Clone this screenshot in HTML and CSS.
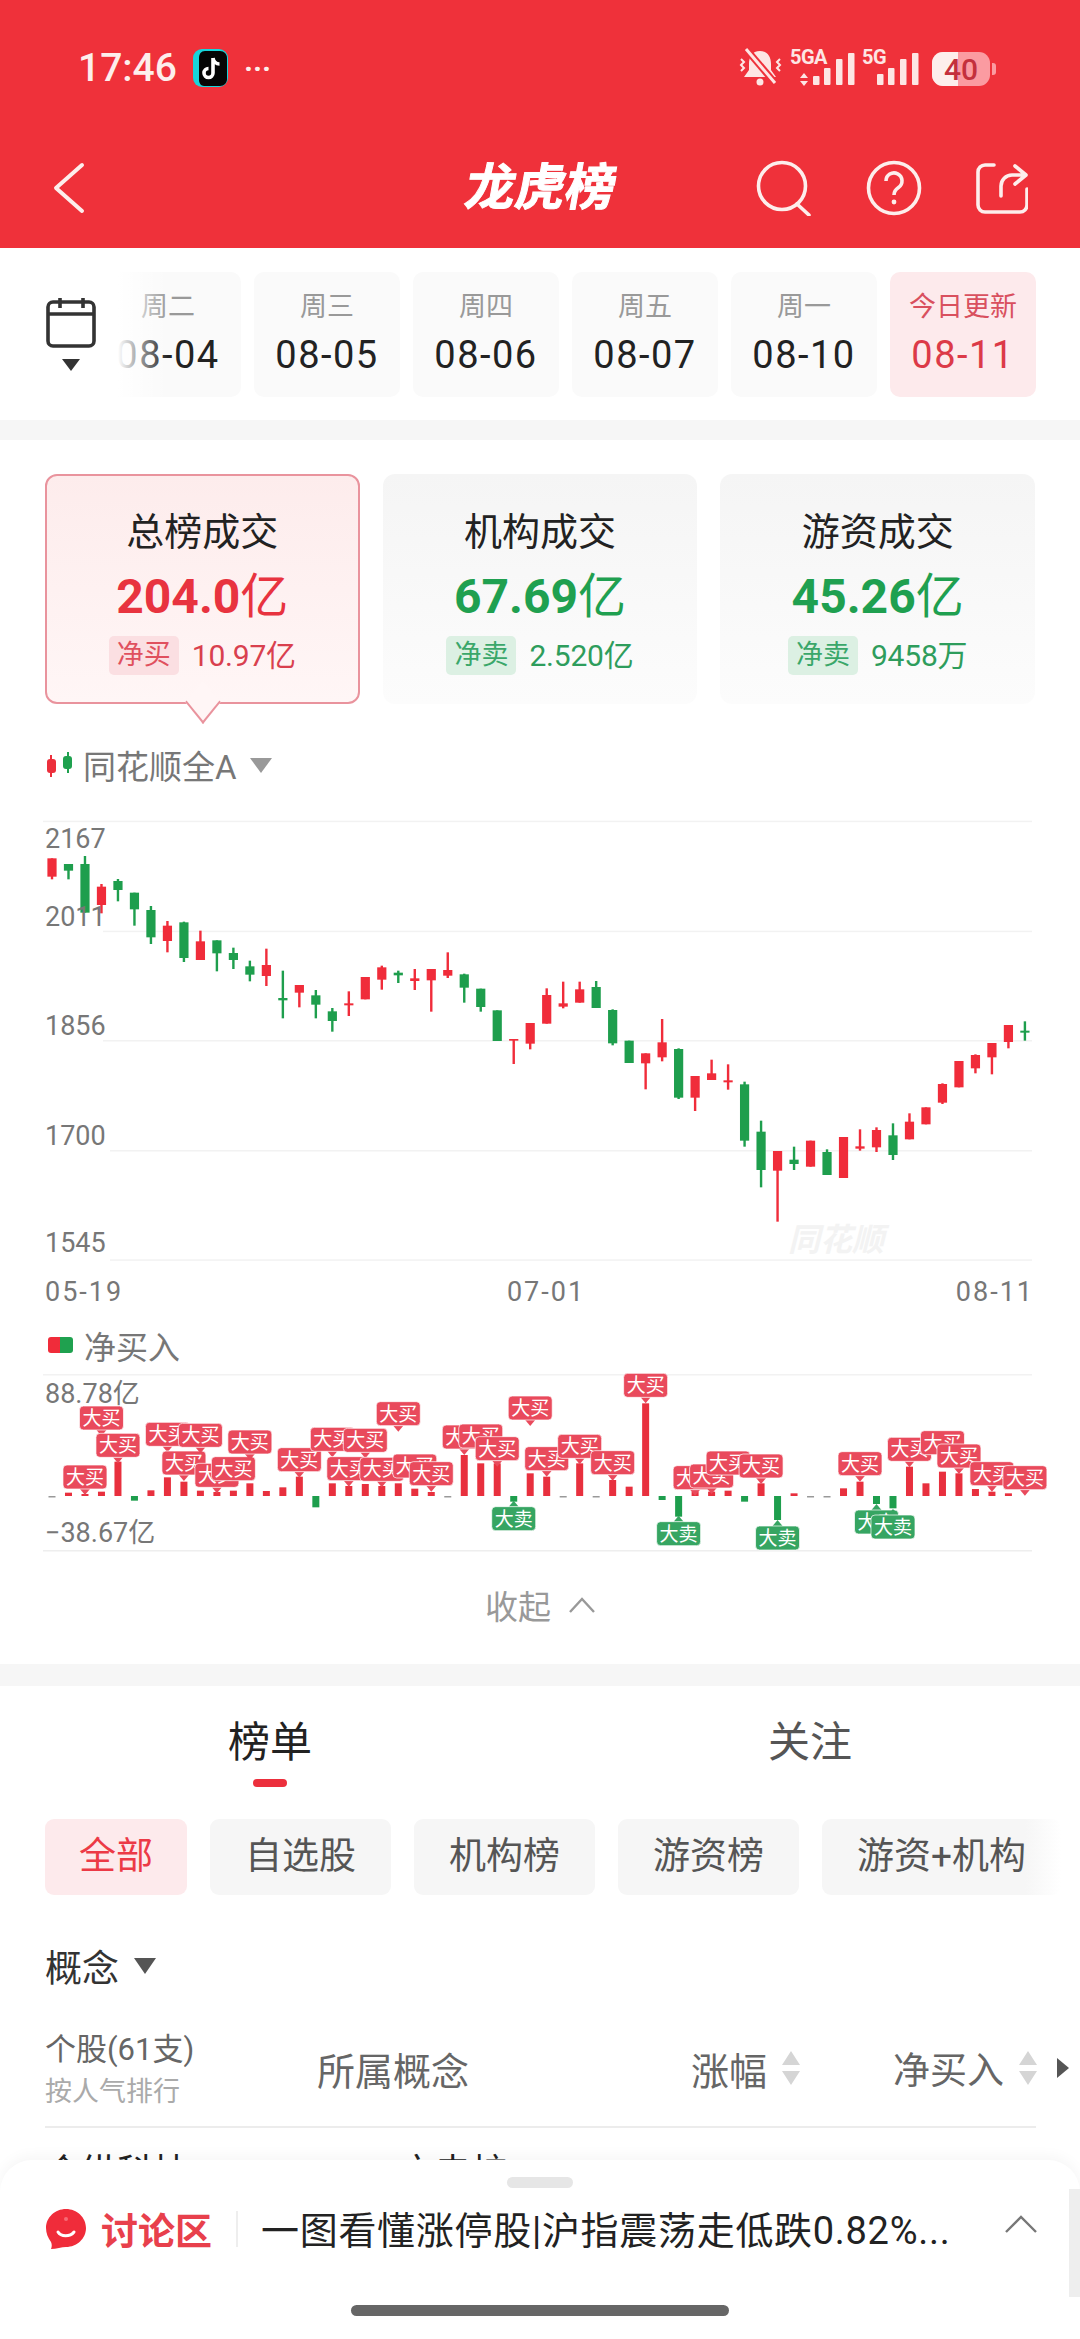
FILE: index.html
```html
<!DOCTYPE html>
<html lang="zh-CN">
<head>
    <meta charset="UTF-8">
    <meta name="viewport" content="width=device-width, initial-scale=1.0">
    <title>龙虎榜</title>
    <link rel="stylesheet" href="styles.css">
</head>
<body>
    <header class="top">
        <div class="status">
            <div class="status-left">
                <span class="clock">17:46</span>
                <svg class="tiktok" width="35" height="38" viewBox="0 0 35 38">
                    <rect width="35" height="38" rx="9" fill="#17d4da"/>
                    <path d="M6 9c0-4 2-7 6-7h15c4 0 7 3 7 7v21c0 4-3 7-7 7H11c-3 0-5-3-5-6z" fill="#050505"/>
                    <path d="M20 9v15a4.500 4.500 0 1 1-4.500-4.500M20 9c.5 3.500 3 6 6.500 6" fill="none" stroke="#fff" stroke-width="3.600"/>
                </svg>
                <span class="dots">···</span>
            </div>
            <svg class="status-right" width="258" height="40" viewBox="0 0 258 40">
                <path d="M22 3c-8 0-11 6-11 13v6l-5 7h32l-5-7v-6c0-7-3-13-11-13z" fill="#fde6e4"/>
                <circle cx="22" cy="34" r="3.500" fill="#fde6e4"/>
                <line x1="8" y1="1" x2="37" y2="35" stroke="#ef313a" stroke-width="7"/>
                <line x1="8" y1="1" x2="37" y2="35" stroke="#fde6e4" stroke-width="3"/>
                <path d="M3 11l3 3-3 3 3 3-3 3M42 11l-3 3 3 3-3 3 3 3" fill="none" stroke="#fde6e4" stroke-width="2"/>
                <text class="net-type" x="52" y="16">5GA</text>
                <path d="M66 25l4 5h-8zM66 38l4-5h-8z" fill="#fde6e4"/>
                <g fill="#fde6e4">
                    <rect x="75" y="28" width="6.500" height="9" rx="1"/>
                    <rect x="86" y="20" width="6.500" height="17" rx="1"/>
                    <rect x="98" y="11" width="6.500" height="26" rx="1"/>
                    <rect x="110" y="5" width="6.500" height="32" rx="1"/>
                    <rect x="139" y="26" width="6.500" height="11" rx="1"/>
                    <rect x="150" y="20" width="6.500" height="17" rx="1"/>
                    <rect x="162" y="11" width="6.500" height="26" rx="1"/>
                    <rect x="174" y="5" width="6.500" height="32" rx="1"/>
                </g>
                <text class="net-type" x="124" y="16">5G</text>
                <rect x="194" y="4" width="58" height="34" rx="11" fill="#fb9ba1"/>
                <path d="M205 4h15v34h-15a11 11 0 0 1-11-11V15a11 11 0 0 1 11-11z" fill="#fdeeec"/>
                <path d="M254 15h1a3 3 0 0 1 3 3v6a3 3 0 0 1-3 3h-1z" fill="#fb9ba1"/>
                <text class="battery-num" x="223" y="32">40</text>
            </svg>
        </div>
        <nav class="nav">
            <svg class="nav-back" width="32" height="52" viewBox="0 0 32 52">
                <polyline points="29,3 3,26 29,49" fill="none" stroke="#fdeeec" stroke-width="4" stroke-linecap="round" stroke-linejoin="round"/>
            </svg>
            <h1 class="nav-title">龙虎榜</h1>
            <div class="nav-icons">
                <svg width="56" height="56" viewBox="0 0 56 56">
                    <circle cx="26" cy="26" r="23.500" fill="none" stroke="#fdeeec" stroke-width="3.600"/>
                    <line x1="41" y1="44" x2="53" y2="55" stroke="#fdeeec" stroke-width="3.600" stroke-linecap="round"/>
                </svg>
                <svg width="56" height="56" viewBox="0 0 56 56">
                    <circle cx="28" cy="28" r="25.500" fill="none" stroke="#fdeeec" stroke-width="3.600"/>
                    <path d="M20 21a8 8 0 1 1 12.500 6.500c-3 2-4.500 3.500-4.500 7.500" fill="none" stroke="#fdeeec" stroke-width="3.600"/>
                    <circle cx="28" cy="42" r="2.400" fill="#fdeeec"/>
                </svg>
                <svg width="52" height="52" viewBox="0 0 52 52">
                    <path d="M18 3H9a7 7 0 0 0-7 7v33a7 7 0 0 0 7 7h35a7 7 0 0 0 7-7V27" fill="none" stroke="#fdeeec" stroke-width="3.600" stroke-linecap="round"/>
                    <path d="M25 34v-10a11 11 0 0 1 11-11h14M39 4l11 9-11 9" fill="none" stroke="#fdeeec" stroke-width="3.600" stroke-linecap="round" stroke-linejoin="round"/>
                </svg>
            </div>
        </nav>
    </header>

    <section class="date-bar">
        <div class="cal-btn">
            <svg width="52" height="76" viewBox="0 0 52 76">
                <rect x="3" y="5" width="46" height="44" rx="5" fill="none" stroke="#333" stroke-width="3.600"/>
                <line x1="3" y1="17" x2="49" y2="17" stroke="#333" stroke-width="3.600"/>
                <path d="M15 1v10M38 1v10" stroke="#333" stroke-width="3.600"/>
                <path d="M17 62h18l-9 12z" fill="#333"/>
            </svg>
        </div>
        <div class="date-scroll">
            <div class="date-tab"><span class="week">周二</span><span class="day">08-04</span></div>
            <div class="date-tab"><span class="week">周三</span><span class="day">08-05</span></div>
            <div class="date-tab"><span class="week">周四</span><span class="day">08-06</span></div>
            <div class="date-tab"><span class="week">周五</span><span class="day">08-07</span></div>
            <div class="date-tab"><span class="week">周一</span><span class="day">08-10</span></div>
            <div class="date-tab active"><span class="week">今日更新</span><span class="day">08-11</span></div>
        </div>
    </section>

    <div class="band"></div>

    <section class="cards">
        <div class="card active">
            <div class="card-title">总榜成交</div>
            <div class="card-value red">204.0<em>亿</em></div>
            <div class="card-sub"><span class="tag tag-red">净买</span><span class="sub-num red-soft">10.97亿</span></div>
        </div>
        <div class="card">
            <div class="card-title">机构成交</div>
            <div class="card-value green">67.69<em>亿</em></div>
            <div class="card-sub"><span class="tag tag-green">净卖</span><span class="sub-num green-soft">2.520亿</span></div>
        </div>
        <div class="card">
            <div class="card-title">游资成交</div>
            <div class="card-value green">45.26<em>亿</em></div>
            <div class="card-sub"><span class="tag tag-green">净卖</span><span class="sub-num green-soft">9458万</span></div>
        </div>
    </section>

    <div class="index-row">
        <svg width="26" height="26" viewBox="0 0 26 26">
            <rect x="3" y="3" width="2" height="22" fill="#ec2f3c"/>
            <rect x="0" y="7" width="9" height="14" rx="3" fill="#ec2f3c"/>
            <rect x="20" y="0" width="2" height="21" fill="#1fa14f"/>
            <rect x="16" y="4" width="9" height="13" rx="3" fill="#1fa14f"/>
        </svg>
        <span>同花顺全A</span>
        <i class="tri tri-grey"></i>
    </div>

    <svg id="klineChart" class="chart" width="1080" height="510" viewBox="0 0 1080 510"></svg>

    <div class="net-row">
        <span class="net-icon"></span>
        <span>净买入</span>
    </div>

    <svg id="netChart" class="chart net-chart" width="1080" height="195" viewBox="0 0 1080 195"></svg>

    <div class="collapse">
        <span>收起</span>
        <svg width="26" height="16" viewBox="0 0 26 16">
            <polyline points="1,15 13,2 25,15" fill="none" stroke="#999" stroke-width="2.400"/>
        </svg>
    </div>

    <div class="band band-low"></div>

    <section class="tabs">
        <div class="tab active">榜单</div>
        <div class="tab">关注</div>
    </section>

    <section class="filters">
        <span class="chip active">全部</span>
        <span class="chip">自选股</span>
        <span class="chip">机构榜</span>
        <span class="chip">游资榜</span>
        <span class="chip">游资+机构</span>
    </section>

    <div class="concept"><span>概念</span><i class="tri tri-dark"></i></div>

    <section class="table-head">
        <div class="col-stock">
            <div class="stock-count">个股(61支)</div>
            <div class="stock-sort">按人气排行</div>
        </div>
        <div class="col-concept">所属概念</div>
        <div class="col-rise">涨幅
            <svg class="sort" width="20" height="34" viewBox="0 0 20 34"><path d="M10 0l9 14H1zM10 34L1 20h18z" fill="#d5d5d5"/></svg>
        </div>
        <div class="col-net">净买入
            <svg class="sort" width="20" height="34" viewBox="0 0 20 34"><path d="M10 0l9 14H1zM10 34L1 20h18z" fill="#d5d5d5"/></svg>
            <svg class="more" width="12" height="20" viewBox="0 0 12 20"><path d="M0 0l12 10L0 20z" fill="#555"/></svg>
        </div>
    </section>
    <div class="table-line"></div>
    <div class="peek-row"><span>合纵科技</span><span>充电桩</span></div>

    <aside class="sheet">
        <div class="sheet-handle"></div>
        <div class="sheet-row">
            <svg class="sheet-logo" width="40" height="40" viewBox="0 0 40 40">
                <path d="M20 0c11 0 20 8.500 20 19s-9 19-20 19c-4 0-10 2-15 2 1-2 1-5 0-7C2 29 0 24 0 19 0 8.500 9 0 20 0z" fill="#f02c3a"/>
                <path d="M12 23c3 5 12 5 16 0" fill="none" stroke="#fff" stroke-width="3" stroke-linecap="round"/>
                <circle cx="20" cy="10" r="2" fill="#f76a74"/>
            </svg>
            <span class="sheet-name">讨论区</span>
            <span class="sheet-line"></span>
            <span class="sheet-text">一图看懂涨停股|沪指震荡走低跌0.82%...</span>
            <svg class="sheet-up" width="32" height="18" viewBox="0 0 32 18">
                <polyline points="1,17 16,2 31,17" fill="none" stroke="#777" stroke-width="2.400"/>
            </svg>
        </div>
        <div class="home-bar"></div>
    </aside>
    <div class="side-strip"></div>

    <script src="chart.js"></script>
</body>
</html>
```

FILE: styles.css
```css
* {
    box-sizing: border-box;
}
html, body {
    margin: 0;
    padding: 0;
}
body {
    position: relative;
    width: 1080px;
    height: 2339px;
    overflow: hidden;
    background: #fff;
    font-family: Roboto, "Noto Sans CJK SC", sans-serif;
    color: #222;
}
svg {
    display: block;
}

/* top red area */
.top {
    height: 248px;
    background: #ef313a;
}
.status {
    height: 136px;
    padding: 0 84px 0 78px;
    display: flex;
    justify-content: space-between;
    align-items: center;
}
.status-left {
    display: flex;
    align-items: center;
}
.clock {
    font-size: 39px;
    font-weight: 500;
    color: #fdeeec;
}
.tiktok {
    margin-left: 16px;
}
.dots {
    margin-left: 16px;
    font-size: 30px;
    font-weight: 700;
    color: #fdeeec;
}
.net-type {
    font-size: 20px;
    font-weight: 700;
    fill: #fde6e4;
    letter-spacing: -0.5px;
}
.battery-num {
    font-size: 30px;
    font-weight: 500;
    fill: #c4303c;
    text-anchor: middle;
}
.nav {
    height: 104px;
    padding: 0 52px 0 53px;
    display: grid;
    grid-template-columns: 1fr auto 1fr;
    align-items: center;
}
.nav-title {
    margin: 0;
    font-size: 50px;
    font-weight: 700;
    color: #fff;
    line-height: 56px;
    transform: skewX(-10deg);
    -webkit-text-stroke: 1px #fff;
}
.nav-icons {
    display: flex;
    justify-content: flex-end;
    align-items: center;
    gap: 54px;
}

/* date strip */
.date-bar {
    height: 172px;
    padding: 24px 44px 23px 0;
    display: flex;
}
.cal-btn {
    width: 100px;
    padding: 25px 0 0 45px;
    flex-shrink: 0;
}
.date-scroll {
    position: relative;
    flex: 1;
    min-width: 0;
    margin-left: 12px;
    overflow: hidden;
    display: flex;
    justify-content: flex-end;
    gap: 13px;
}
.date-scroll::before {
    content: "";
    position: absolute;
    left: 0;
    top: 0;
    bottom: 0;
    width: 56px;
    background: linear-gradient(90deg, #fff 10%, rgba(255, 255, 255, 0));
}
.date-tab {
    width: 146px;
    flex-shrink: 0;
    background: #fafafa;
    border-radius: 10px;
    display: flex;
    flex-direction: column;
    align-items: center;
}
.date-tab .week {
    margin-top: 15px;
    font-size: 27px;
    line-height: 40px;
    color: #999;
}
.date-tab .day {
    margin-top: 3px;
    font-size: 38px;
    line-height: 50px;
    letter-spacing: 1.5px;
    color: #222;
}
.date-tab.active {
    background: #fdeaec;
}
.date-tab.active .week {
    color: #d9505e;
}
.date-tab.active .day {
    color: #dc3a48;
}
.band {
    height: 20px;
    background: #f6f6f6;
}
.band-low {
    height: 22px;
}

/* summary cards */
.cards {
    padding: 34px 45px 0;
    display: grid;
    grid-template-columns: repeat(3, 1fr);
    gap: 23px;
}
.card {
    position: relative;
    height: 230px;
    border-radius: 12px;
    background: linear-gradient(180deg, #f5f5f5, #fcfcfc);
    display: flex;
    flex-direction: column;
    align-items: center;
}
.card.active {
    background: linear-gradient(180deg, #fdecec, #fff6f6);
    border: 2px solid #e9939d;
}
.card.active::after {
    content: "";
    position: absolute;
    left: 50%;
    bottom: -14px;
    width: 26px;
    height: 26px;
    margin-left: -13px;
    background: #fff6f6;
    border-right: 2px solid #e9939d;
    border-bottom: 2px solid #e9939d;
    transform: rotate(45deg) skew(6deg, 6deg);
}
.card-title {
    margin-top: 30px;
    font-size: 38px;
    line-height: 52px;
    color: #222;
}
.card:not(.active) .card-title {
    margin-top: 32px;
}
.card-value {
    font-size: 48px;
    font-weight: 700;
    line-height: 62px;
    margin-top: 8px;
}
.card-value em {
    font-style: normal;
    font-weight: 400;
}
.red {
    color: #e8333f;
}
.green {
    color: #1fa050;
}
.card-sub {
    margin-top: 3px;
    display: flex;
    align-items: center;
    gap: 13px;
}
.tag {
    width: 70px;
    height: 39px;
    border-radius: 5px;
    font-size: 27px;
    line-height: 39px;
    text-align: center;
}
.tag-red {
    background: #fbdfe2;
    color: #e0505e;
}
.tag-green {
    background: #dcf0e3;
    color: #3aa76a;
}
.sub-num {
    margin-bottom: 4px;
    font-size: 30px;
    letter-spacing: -0.2px;
}
.red-soft {
    color: #d9404e;
}
.green-soft {
    color: #2e9d5c;
}

/* chart titles */
.index-row {
    height: 40px;
    margin-top: 41px;
    padding-left: 47px;
    display: flex;
    align-items: center;
    font-size: 33px;
    color: #777;
}
.index-row span {
    margin-left: 10px;
}
.tri {
    display: block;
    width: 0;
    height: 0;
    border-left: 11px solid transparent;
    border-right: 11px solid transparent;
}
.tri-grey {
    margin-left: 13px;
    border-top: 15px solid #999;
}
.tri-dark {
    margin-left: 15px;
    border-top: 16px solid #555;
}
.chart {
    margin-top: 15px;
}
.net-chart {
    margin-top: 5px;
}
.chart-label {
    font-size: 27px;
    fill: #777;
}
.chart-date {
    letter-spacing: 2px;
}
.chart-mark {
    font-family: "Noto Sans CJK SC", sans-serif;
    font-size: 19px;
    fill: #fff;
    text-anchor: middle;
}
.watermark {
    font-family: "Noto Sans CJK SC", sans-serif;
    font-size: 32px;
    font-weight: 700;
    font-style: italic;
    fill: #f3f3f3;
}
.net-row {
    height: 40px;
    margin-top: 15px;
    padding-left: 48px;
    display: flex;
    align-items: center;
    font-size: 32px;
    color: #777;
}
.net-row span:last-child {
    margin-left: 11px;
}
.net-icon {
    width: 25px;
    height: 16px;
    border-radius: 3px;
    background: linear-gradient(90deg, #f02c3a 50%, #1fa14f 50%);
}
.collapse {
    height: 80px;
    margin-bottom: 19px;
    display: flex;
    justify-content: center;
    align-items: center;
    gap: 18px;
    font-size: 33px;
    color: #999;
}

/* list part */
.tabs {
    display: grid;
    grid-template-columns: 1fr 1fr;
    height: 102px;
    padding-top: 33px;
}
.tab {
    position: relative;
    text-align: center;
    font-size: 42px;
    line-height: 48px;
    color: #555;
}
.tab.active {
    color: #222;
}
.tab.active::after {
    content: "";
    position: absolute;
    left: 50%;
    top: 60px;
    width: 34px;
    height: 8px;
    margin-left: -17px;
    border-radius: 4px;
    background: #ec2f3c;
}
.filters {
    margin-top: 31px;
    padding-left: 45px;
    display: flex;
    gap: 23px;
}
.chip {
    height: 76px;
    padding: 0 35px;
    flex-shrink: 0;
    border-radius: 9px;
    background: #f6f6f6;
    font-size: 37px;
    line-height: 76px;
    color: #555;
}
.chip:last-child {
    background: linear-gradient(90deg, #f6f6f6 85%, #fff);
}
.chip.active {
    padding: 0 34px;
    background: #fdeaec;
    color: #ec3a46;
}
.concept {
    height: 40px;
    margin-top: 51px;
    padding-left: 45px;
    display: flex;
    align-items: center;
    font-size: 37px;
    color: #333;
}
.table-head {
    position: relative;
    height: 97px;
    margin-top: 43px;
    padding: 0 11px 13px 45px;
    display: flex;
    align-items: center;
    color: #666;
    white-space: nowrap;
}
.col-stock {
    width: 272px;
}
.stock-count {
    font-size: 31px;
    line-height: 42px;
}
.stock-sort {
    font-size: 27px;
    line-height: 42px;
    color: #aaa;
}
.col-concept {
    width: 374px;
    margin-bottom: 6px;
    font-size: 38px;
}
.col-rise {
    width: 202px;
    margin-bottom: 6px;
    font-size: 38px;
    display: flex;
    align-items: center;
}
.col-net {
    flex: 1;
    margin-bottom: 6px;
    font-size: 37px;
    display: flex;
    align-items: center;
}
.sort {
    margin-left: 14px;
}
.more {
    margin-left: 19px;
}
.table-line {
    height: 2px;
    margin: 0 44px 0 45px;
    background: #ececec;
}
.peek-row {
    margin-top: 23px;
    padding-left: 45px;
    display: flex;
    gap: 210px;
    font-size: 36px;
    line-height: 44px;
}

/* bottom sheet */
.sheet {
    position: absolute;
    left: 0;
    right: 0;
    bottom: 0;
    height: 179px;
    background: #fff;
    border-radius: 32px 32px 0 0;
    box-shadow: 0 -4px 14px rgba(0, 0, 0, 0.04);
}
.sheet-handle {
    width: 66px;
    height: 11px;
    margin: 17px auto 0;
    border-radius: 6px;
    background: #e6e6e6;
}
.sheet-row {
    margin-top: 21px;
    height: 40px;
    padding-left: 46px;
    display: flex;
    align-items: center;
}
.sheet-name {
    margin-left: 15px;
    font-size: 37px;
    font-weight: 700;
    color: #e8404c;
}
.sheet-line {
    width: 2px;
    height: 36px;
    margin-left: 24px;
    background: #eee;
}
.sheet-text {
    width: 730px;
    margin: 0 0 3px 23px;
    font-size: 38px;
    letter-spacing: 0.7px;
    color: #222;
    white-space: nowrap;
}
.sheet-up {
    margin: -10px 0 0 14px;
}
.home-bar {
    width: 378px;
    height: 11px;
    margin: 56px auto 0;
    border-radius: 6px;
    background: #666;
}
.side-strip {
    position: absolute;
    right: 0;
    top: 2189px;
    width: 11px;
    height: 108px;
    background: #eee;
}
```

FILE: chart.js
```js
// y values were read off at 3x, so they are divided by 3 when drawn
const RED = "#f02c3a";
const GREEN = "#1e9e4d";
const STEP = 16.49;
const LEFT = 52;

function xOf(i) {
    return LEFT + STEP * i;
}

// [up?, high, low, open, close]
const candles = [
    [1,175,238,175,230],[0,192,238,192,212],[0,168,338,192,338],[1,252,340,260,315],[0,237,304,243,270],
    [0,278,377,278,328],[0,318,432,330,412],[1,363,457,377,423],[0,365,486,367,474],[1,392,480,424,480],
    [0,421,514,421,460],[0,443,507,459,480],[0,482,544,499,524],[1,446,558,495,528],[0,512,655,594,601],
    [1,555,622,555,578],[0,570,655,586,614],[0,624,695,634,663],[1,574,648,610,616],[1,531,598,531,598],
    [1,497,569,502,539],[0,512,549,518,526],[1,507,570,535,543],[1,507,635,507,541],[1,457,534,510,527],
    [0,521,608,523,563],[0,566,635,566,621],[0,631,723,631,723],[1,717,792,717,722],[1,669,748,669,731],
    [1,565,671,585,671],[1,545,625,610,620],[1,545,608,568,608],[0,543,624,561,624],[0,628,736,630,730],
    [0,722,789,722,789],[1,760,868,760,790],[1,657,784,727,772],[0,745,897,747,893],[1,828,933,828,893],
    [1,779,840,820,840],[1,793,869,841,847],[0,845,1040,853,1022],[0,962,1162,995,1110],[1,1053,1265,1053,1112],
    [0,1040,1110,1079,1092],[1,1022,1100,1022,1100],[0,1048,1125,1056,1125],[1,1011,1134,1011,1134],[1,988,1052,1039,1046],
    [1,982,1056,990,1042],[0,970,1080,1006,1065],[1,940,1018,965,1018],[1,922,973,922,973],[1,850,912,852,908],
    [1,783,862,783,862],[1,763,820,765,805],[1,729,823,729,772],[1,675,745,675,726],[0,664,722,692,698]
];

function drawKline() {
    let html = "";
    [[62, 43], [392, 103], [720, 103], [1050, 110], [1378, 110]].forEach(g => {
        html += `<rect x="${g[1]}" y="${g[0] / 3}" width="${1032 - g[1]}" height="1.5" fill="#f2f2f2"/>`;
    });
    html += `<text class="watermark" x="788" y="451">同花顺</text>`;
    candles.forEach((c, i) => {
        let color = c[0] ? RED : GREEN;
        let x = xOf(i);
        let top = Math.min(c[3], c[4]);
        let h = Math.abs(c[4] - c[3]);
        html += `<rect x="${x - 1.2}" y="${c[1] / 3}" width="2.4" height="${(c[2] - c[1]) / 3}" fill="${color}"/>`;
        html += `<rect x="${x - 4.6}" y="${top / 3}" width="9.2" height="${h / 3}" fill="${color}"/>`;
    });
    [["2167", 48], ["2011", 126], ["1856", 235], ["1700", 345], ["1545", 452]].forEach(t => {
        html += `<text class="chart-label" x="45" y="${t[1]}">${t[0]}</text>`;
    });
    html += `<text class="chart-label chart-date" x="45" y="501">05-19</text>`;
    html += `<text class="chart-label chart-date" x="546" y="501" text-anchor="middle">07-01</text>`;
    html += `<text class="chart-label chart-date" x="1034" y="501" text-anchor="end">08-11</text>`;
    document.getElementById("klineChart").innerHTML = html;
}

// top edge of each bar, zero line is at 528; green ones go below it
const bars = [
    530,518,522,515,425,-542,511,472,485,512,516,512,490,513,502,470,-562,490,498,492,
    498,490,506,516,530,405,430,430,-545,460,470,530,430,530,480,500,250,-540,-590,515,
    515,512,-545,490,-600,520,530,530,505,485,-552,-565,440,490,455,460,507,515,520,0
];

// [index of bar, top of label]
const buyMarks = [
    [2,435],[3,258],[4,340],[7,307],[8,393],[9,310],[10,430],[11,410],[12,330],[15,383],[17,322],[18,410],
    [19,325],[20,412],[21,245],[22,402],[23,425],[25,315],[26,312],[27,350],[29,228],[30,380],[32,343],
    [34,392],[36,160],[39,437],[40,432],[41,393],[43,402],[49,395],[52,352],[54,332],[55,372],[57,425],[59,437]
];
const sellMarks = [[28,560],[38,605],[44,618],[50,570],[51,585]];

function mark(i, zy, text, fill) {
    let x = xOf(i);
    let y = zy / 3 - 50;
    let tip = text == "大买"
        ? `M${x - 5} ${y + 24}L${x} ${y + 30}L${x + 5} ${y + 24}z`
        : `M${x - 5} ${y}L${x} ${y - 6}L${x + 5} ${y}z`;
    return `<path d="${tip}" fill="${fill}"/>
        <rect x="${x - 22}" y="${y}" width="44" height="24" rx="4" fill="${fill}" stroke="#fff" stroke-opacity="0.7"/>
        <text class="chart-mark" x="${x}" y="${y + 19}">${text}</text>`;
}

function drawNet() {
    let html = "";
    // y = zoomed / 3 - 50
    html += `<rect x="43" y="4" width="989" height="1.5" fill="#f2f2f2"/>`;
    html += `<rect x="43" y="180" width="989" height="1.5" fill="#eeeeee"/>`;
    bars.forEach((b, i) => {
        if (!b) return;
        let x = xOf(i) - 3.5;
        if (b < 0) {
            html += `<rect x="${x}" y="126" width="7" height="${(-b - 528) / 3}" fill="${GREEN}"/>`;
        } else if (b > 528) {
            html += `<rect x="${x}" y="126" width="7" height="1.5" fill="#999"/>`;
        } else {
            html += `<rect x="${x}" y="${b / 3 - 50}" width="7" height="${(528 - b) / 3}" fill="#e8303e"/>`;
        }
    });
    html += `<text class="chart-label" x="45" y="33">88.78亿</text>`;
    html += `<text class="chart-label" x="45" y="172">−38.67亿</text>`;
    let marks = "";
    buyMarks.forEach(m => { marks += mark(m[0], m[1], "大买", "#e94a5c"); });
    sellMarks.forEach(m => { marks += mark(m[0], m[1], "大卖", "#36a562"); });
    document.getElementById("netChart").innerHTML = html + marks;
}

drawKline();
drawNet();
```
